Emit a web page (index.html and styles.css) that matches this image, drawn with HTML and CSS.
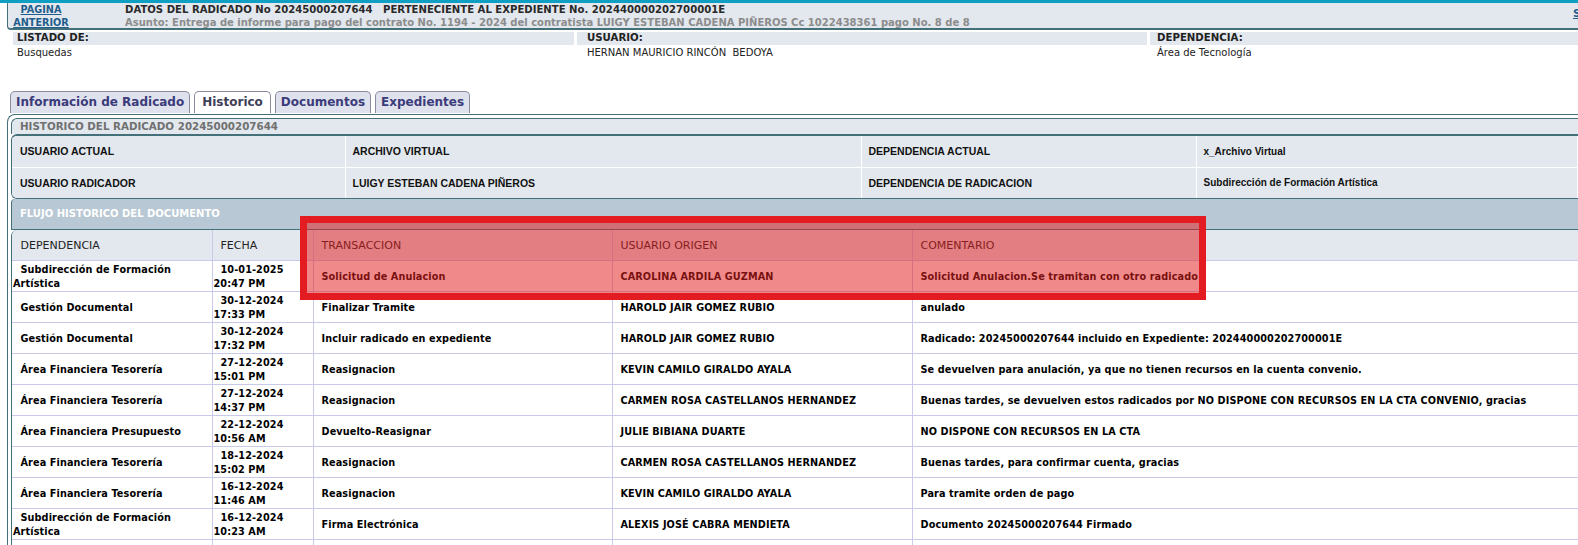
FILE: index.html
```html
<!DOCTYPE html>
<html lang="es">
<head>
<meta charset="utf-8">
<title>Historico del radicado</title>
<link rel="stylesheet" href="styles.css">
</head>
<body>
<div class="strip"></div>
<div class="topbar">
  <div class="back"><a href="#">PAGINA<br>ANTERIOR</a></div>
  <div class="title">
    <div class="t1">DATOS DEL RADICADO No 20245000207644&nbsp;&nbsp; PERTENECIENTE AL EXPEDIENTE No. 202440000202700001E</div>
    <div class="t2">Asunto: Entrega de informe para pago del contrato No. 1194 - 2024 del contratista LUIGY ESTEBAN CADENA PIÑEROS Cc 1022438361 pago No. 8 de 8</div>
  </div>
  <div class="exit"><a href="#">SALIR</a></div>
</div>

<div class="listing">
  <div class="lab l1">LISTADO DE:</div>
  <div class="lab l2">USUARIO:</div>
  <div class="lab l3">DEPENDENCIA:</div>
  <div class="val l1">Busquedas</div>
  <div class="val l2">HERNAN MAURICIO RINCÓN&nbsp; BEDOYA</div>
  <div class="val l3">Área de Tecnología</div>
</div>

<div class="tabs">
  <div class="tab">Información de Radicado</div>
  <div class="tab on">Historico</div>
  <div class="tab">Documentos</div>
  <div class="tab">Expedientes</div>
</div>

<div class="panel">
  <div class="hist-title">HISTORICO DEL RADICADO 20245000207644</div>
  <div class="info">
    <table class="info-table">
      <colgroup><col class="i1"><col class="i2"><col class="i3"><col></colgroup>
      <tr><td class="c1">USUARIO ACTUAL</td><td>ARCHIVO VIRTUAL</td><td>DEPENDENCIA ACTUAL</td><td class="c4">x_Archivo Virtual</td></tr>
      <tr><td class="c1">USUARIO RADICADOR</td><td>LUIGY ESTEBAN CADENA PIÑEROS</td><td>DEPENDENCIA DE RADICACION</td><td class="c4">Subdirección de Formación Artística</td></tr>
    </table>
  </div>
  <div class="flujo">FLUJO HISTORICO DEL DOCUMENTO</div>
  <div class="flow">
    <table class="flow-table">
      <colgroup><col class="w1"><col class="w2"><col class="w3"><col class="w4"><col></colgroup>
      <tr class="head"><th>DEPENDENCIA</th><th>FECHA</th><th>TRANSACCION</th><th>USUARIO ORIGEN</th><th>COMENTARIO</th></tr>
      <tr><td>Subdirección de Formación Artística</td><td>10-01-2025 20:47 PM</td><td>Solicitud de Anulacion</td><td>CAROLINA ARDILA GUZMAN</td><td>Solicitud Anulacion.Se tramitan con otro radicado</td></tr>
      <tr><td>Gestión Documental</td><td>30-12-2024 17:33 PM</td><td>Finalizar Tramite</td><td>HAROLD JAIR GOMEZ RUBIO</td><td>anulado</td></tr>
      <tr><td>Gestión Documental</td><td>30-12-2024 17:32 PM</td><td>Incluir radicado en expediente</td><td>HAROLD JAIR GOMEZ RUBIO</td><td>Radicado: 20245000207644 incluido en Expediente: 202440000202700001E</td></tr>
      <tr><td>Área Financiera Tesorería</td><td>27-12-2024 15:01 PM</td><td>Reasignacion</td><td>KEVIN CAMILO GIRALDO AYALA</td><td>Se devuelven para anulación, ya que no tienen recursos en la cuenta convenio.</td></tr>
      <tr><td>Área Financiera Tesorería</td><td>27-12-2024 14:37 PM</td><td>Reasignacion</td><td>CARMEN ROSA CASTELLANOS HERNANDEZ</td><td>Buenas tardes, se devuelven estos radicados por NO DISPONE CON RECURSOS EN LA CTA CONVENIO, gracias</td></tr>
      <tr><td>Área Financiera Presupuesto</td><td>22-12-2024 10:56 AM</td><td>Devuelto-Reasignar</td><td>JULIE BIBIANA DUARTE</td><td>NO DISPONE CON RECURSOS EN LA CTA</td></tr>
      <tr><td>Área Financiera Tesorería</td><td>18-12-2024 15:02 PM</td><td>Reasignacion</td><td>CARMEN ROSA CASTELLANOS HERNANDEZ</td><td>Buenas tardes, para confirmar cuenta, gracias</td></tr>
      <tr><td>Área Financiera Tesorería</td><td>16-12-2024 11:46 AM</td><td>Reasignacion</td><td>KEVIN CAMILO GIRALDO AYALA</td><td>Para tramite orden de pago</td></tr>
      <tr><td>Subdirección de Formación Artística</td><td>16-12-2024 10:23 AM</td><td>Firma Electrónica</td><td>ALEXIS JOSÉ CABRA MENDIETA</td><td>Documento 20245000207644 Firmado</td></tr>
      <tr><td></td><td></td><td></td><td></td><td></td></tr>
    </table>
  </div>
</div>

<div class="highlight"></div>
</body>
</html>
```

FILE: styles.css
```css
html, body {
  margin: 0;
  padding: 0;
  background: #ffffff;
}
body {
  font-family: "DejaVu Sans", Verdana, sans-serif;
  color: #222;
  overflow: hidden;
  width: 1578px;
}
a {
  color: #1f5d8c;
  text-decoration: underline;
}
.strip {
  height: 3px;
  background: #0f9fc2;
}
.topbar {
  display: flex;
  margin-left: 7px;
  height: 24px;
  padding-top: 1px;
  background: #e3e8ee;
  border-left: 1px solid #44707a;
  border-bottom: 2px solid #44707a;
  border-bottom-left-radius: 4px;
}
.back {
  width: 66px;
  flex-shrink: 0;
  text-align: center;
  font-weight: bold;
  font-size: 9.7px;
  line-height: 12.5px;
}
.title {
  margin-left: 51px;
  font-weight: bold;
  line-height: 12.5px;
  white-space: nowrap;
  overflow: hidden;
}
.t1 { color: #2a2a2a; font-size: 10.1px; }
.t2 { color: #8c8c8c; font-size: 10px; }
.exit {
  margin-left: auto;
  flex: 0 0 5px;
  overflow: hidden;
  white-space: nowrap;
  font-weight: bold;
  font-size: 10.7px;
  line-height: 12.5px;
  padding-top: 4px;
}

.listing {
  display: grid;
  grid-template-columns: 561px 570px 1fr;
  column-gap: 3px;
  margin: 2px 0 0 13px;
}
.lab {
  background: #e3e8ee;
  font-weight: bold;
  font-size: 10.2px;
  line-height: 12.5px;
  color: #222;
}
.val {
  font-size: 10px;
  line-height: 13px;
  padding-top: 1px;
  color: #222;
}
.l1 { padding-left: 4px; }
.l2 { padding-left: 10px; }
.l3 { padding-left: 7px; }

.tabs {
  display: flex;
  gap: 4px;
  margin: 32px 0 0 10px;
}
.tab {
  height: 21px;
  border: 1px solid #8b8ba0;
  border-bottom: none;
  border-radius: 5px 5px 0 0;
  background: #dfe2ec;
  font-weight: bold;
  font-size: 12px;
  line-height: 21px;
  color: #3b3b7b;
  padding: 0 5px;
}
.tab.on {
  background: #ffffff;
  color: #404058;
  padding: 0 7px;
}

.panel {
  margin: 1px 0 0 7px;
  border-top: 1px solid #44707a;
  border-left: 1px solid #44707a;
  border-top-left-radius: 8px;
  padding: 3px 0 0 3px;
}
.hist-title {
  border-top: 1px solid #44707a;
  border-left: 1px solid #44707a;
  border-top-left-radius: 6px;
  background: #e3e8ee;
  height: 15px;
  font-weight: bold;
  font-size: 10.3px;
  line-height: 15px;
  color: #707070;
  padding-left: 8px;
}
.info {
  border-top: 2px solid #44707a;
  border-bottom: 1px solid #44707a;
  border-left: 1px solid #44707a;
  border-radius: 6px 0 0 6px;
  overflow: hidden;
  background: #e3e8ee;
}
.info-table {
  border-collapse: collapse;
  table-layout: fixed;
  width: 100%;
}
.i1 { width: 333px; }
.i2 { width: 516px; }
.i3 { width: 335px; }
.info-table td {
  height: 31px;
  padding: 0 0 0 7px;
  background: #e3e8ee;
  border-right: 1px solid #ffffff;
  border-bottom: 1px solid #ffffff;
  font-family: "Liberation Sans", Arial, sans-serif;
  font-weight: bold;
  font-size: 10.5px;
  color: #111;
  vertical-align: middle;
  white-space: nowrap;
  overflow: hidden;
}
.info-table tr:last-child td { border-bottom: none; height: 30px; }
.info-table .c1 { padding-left: 8px; }
.info-table .c4 { font-size: 10px; }

.flujo {
  border-left: 1px solid #44707a;
  border-top-left-radius: 4px;
  border-bottom: 1px solid #44707a;
  background: #b8c8d4;
  height: 30px;
  font-weight: bold;
  font-size: 10px;
  line-height: 30px;
  color: #ffffff;
  padding-left: 8px;
}
.flow {
  border-left: 1px solid #44707a;
  border-top-left-radius: 6px;
  overflow: hidden;
}
.flow-table {
  border-collapse: collapse;
  table-layout: fixed;
  width: 100%;
}
.w1 { width: 200px; }
.w2 { width: 101px; }
.w3 { width: 299px; }
.w4 { width: 300px; }
.flow-table th,
.flow-table td {
  height: 28px;
  padding: 2px 1px 0;
  border-left: 1px solid #c9c9ec;
  border-bottom: 1px solid #c9c9ec;
  text-align: left;
  vertical-align: middle;
  text-indent: 7px;
}
.flow-table th:first-child,
.flow-table td:first-child {
  border-left: none;
  text-indent: 7.5px;
}
.flow-table th {
  background: #e3e8ee;
  font-weight: normal;
  font-size: 11px;
  color: #222;
}
.flow-table td {
  font-weight: bold;
  font-size: 9.7px;
  letter-spacing: 0.1px;
  line-height: 14px;
  color: #000;
}

.highlight {
  position: absolute;
  left: 300px;
  top: 216px;
  width: 906px;
  height: 84px;
  box-sizing: border-box;
  border: 7px solid #e31c22;
  background: rgba(226, 30, 30, 0.52);
}
```
